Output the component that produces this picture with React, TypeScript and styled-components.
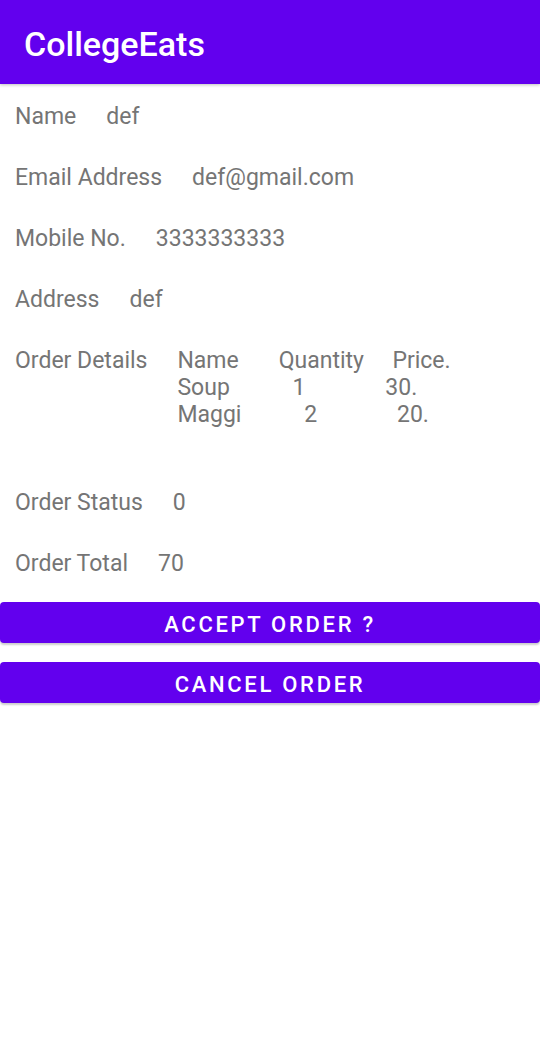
import React from "react";
import styled, { createGlobalStyle } from "styled-components";

const Global = createGlobalStyle`
  html, body { margin: 0; padding: 0; background: #ffffff; }
  body { font-family: Roboto, "Noto Sans", sans-serif; }
`;

const Screen = styled.div`
  width: 540px;
  min-height: 1057px;
  background: #fff;
  display: flex;
  flex-direction: column;
`;

const AppBar = styled.header`
  height: 84px;
  background: #6200ee;
  display: flex;
  align-items: center;
  padding: 4px 24px 0;
  box-sizing: border-box;
  box-shadow: 0 1px 3px rgba(0, 0, 0, 0.25);
`;

const Title = styled.h1`
  margin: 0;
  font-family: Roboto, sans-serif;
  font-weight: 500;
  font-size: 34px;
  color: #fff;
`;

const Content = styled.main`
  display: flex;
  flex-direction: column;
  padding-top: 19px;
`;

const Row = styled.div`
  display: flex;
  align-items: flex-start;
  padding-left: 15px;
  margin-bottom: 34px;
`;

const Label = styled.span`
  font-size: 23px;
  line-height: 27px;
  color: #757575;
  margin-right: 30px;
  white-space: nowrap;
`;

const Value = styled.span`
  font-size: 23px;
  line-height: 27px;
  color: #757575;
  white-space: pre;
`;

const Buttons = styled.div`
  display: flex;
  flex-direction: column;
  gap: 19px;
  margin-top: -9px;
`;

const Button = styled.button`
  height: 41px;
  width: 540px;
  border: none;
  border-radius: 4px;
  background: #6200ee;
  color: #fff;
  font-family: Roboto, sans-serif;
  font-weight: 500;
  font-size: 22px;
  letter-spacing: 2.7px;
  text-transform: uppercase;
  box-shadow: 0 2px 2px rgba(0, 0, 0, 0.2);
  padding: 3px 0 0;
`;

const sp = (n: number) => " ".repeat(n);

const orderTable = [
  "Name" + sp(7) + "Quantity" + sp(5) + "Price.",
  "Soup" + sp(11) + "1" + sp(14) + "30.",
  "Maggi" + sp(11) + "2" + sp(14) + "20.",
  " ",
].join("\n");

const rows: [string, string][] = [
  ["Name", "def"],
  ["Email Address", "def@gmail.com"],
  ["Mobile No.", "3333333333"],
  ["Address", "def"],
  ["Order Details", orderTable],
  ["Order Status", "0"],
  ["Order Total", "70"],
];

export default function App() {
  return (
    <Screen>
      <Global />
      <AppBar>
        <Title>CollegeEats</Title>
      </AppBar>
      <Content>
        {rows.map(([l, v]) => (
          <Row key={l}>
            <Label>{l}</Label>
            <Value>{v}</Value>
          </Row>
        ))}
        <Buttons>
          <Button>Accept Order ?</Button>
          <Button>Cancel Order</Button>
        </Buttons>
      </Content>
    </Screen>
  );
}
